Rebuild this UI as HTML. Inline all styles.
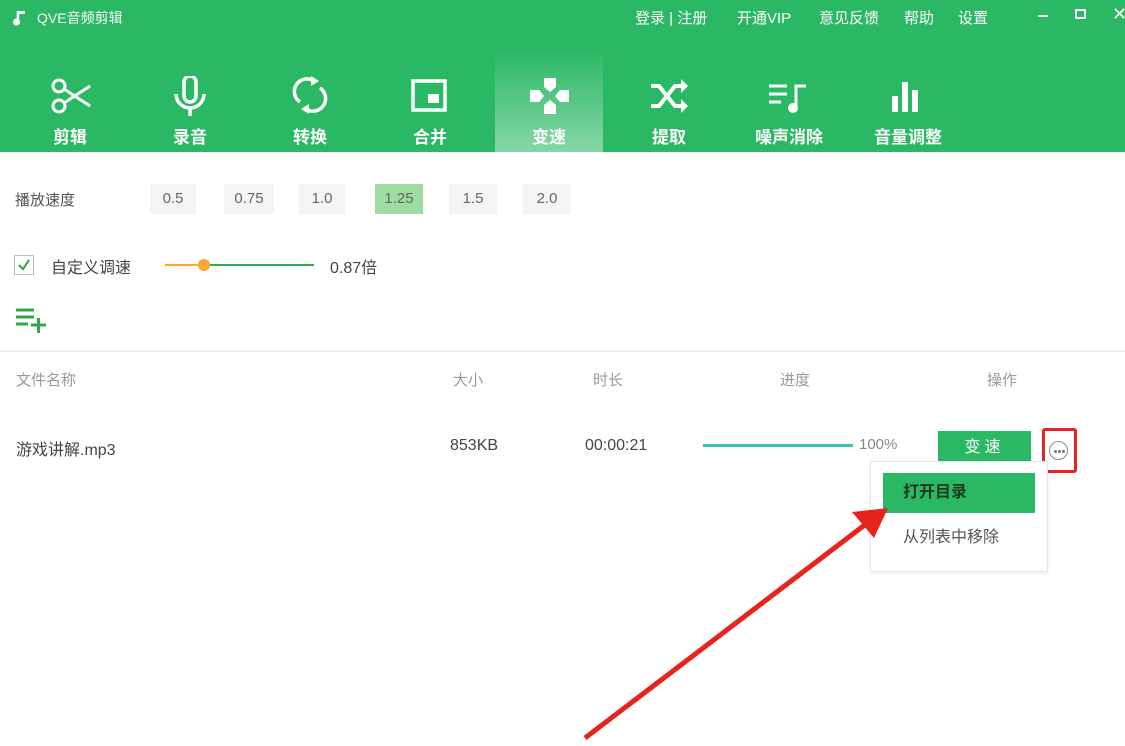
<!DOCTYPE html>
<html><head><meta charset="utf-8"><style>
*{margin:0;padding:0;box-sizing:border-box}
body{width:1125px;height:746px;background:#fff;position:relative;overflow:hidden;font-family:"Liberation Sans","Noto Sans CJK SC",sans-serif;color:#333}
.hdr{position:absolute;left:0;top:0;width:1125px;height:152px;background:#2bb864}
.t{position:absolute;color:#fff;font-size:15px}
.tab{position:absolute;top:50px;width:108px;height:102px;text-align:center;color:#fff;font-size:17px;font-weight:bold}
.tab svg{position:absolute;left:34px;top:26px}
.tab span{position:absolute;left:0;right:0;top:73px}
.act{background:linear-gradient(#2bb864,#86d6a6)}
.sp{position:absolute;top:184px;height:30px;line-height:30px;background:#f3f4f5;color:#666;font-size:15px;text-align:center}
.g{position:absolute;font-size:15px;color:#999}
</style></head><body>
<div class="hdr">
<svg style="position:absolute;left:12px;top:8px" width="18" height="18"><path d="M6 3v10" stroke="#fff" stroke-width="2.5"/><path d="M6 3h7v3H6z" fill="#fff"/><circle cx="4.5" cy="14" r="3.5" fill="#fff"/></svg>
<div class="t" style="left:37px;top:8px;font-size:14px">QVE音频剪辑</div>
<div class="t" style="left:635px;top:7px">登录 | 注册</div>
<div class="t" style="left:737px;top:7px">开通VIP</div>
<div class="t" style="left:819px;top:7px">意见反馈</div>
<div class="t" style="left:904px;top:7px">帮助</div>
<div class="t" style="left:958px;top:7px">设置</div>
<div style="position:absolute;left:1038px;top:15px;width:10px;height:2px;background:#fff"></div>
<div style="position:absolute;left:1075px;top:9px;width:11px;height:10px;border:2px solid #fff"></div>
<div class="t" style="left:1112px;top:4px;font-size:18px">✕</div>

<div class="tab" style="left:16px"><svg width="44" height="40"><circle cx="9" cy="10" r="6" fill="none" stroke="#fff" stroke-width="3"/><circle cx="9" cy="30" r="6" fill="none" stroke="#fff" stroke-width="3"/><path d="M14 13L40 30M14 27L40 10" stroke="#fff" stroke-width="3"/></svg><span>剪辑</span></div>
<div class="tab" style="left:136px"><svg width="44" height="40"><rect x="14" y="0" width="12" height="26" rx="6" fill="none" stroke="#fff" stroke-width="3.5"/><path d="M6 18a14 14 0 0 0 28 0M20 32v8" fill="none" stroke="#fff" stroke-width="3.5"/></svg><span>录音</span></div>
<div class="tab" style="left:256px"><svg width="44" height="40"><path d="M10 26a12 12 0 0 1 14-21M30 12a12 12 0 0 1-14 21" fill="none" stroke="#fff" stroke-width="3.5"/><path d="M21 0l8 5-8 5zM19 28l-8 5 8 5z" fill="#fff"/></svg><span>转换</span></div>
<div class="tab" style="left:376px"><svg width="44" height="40"><rect x="3" y="5" width="32" height="29" fill="none" stroke="#fff" stroke-width="3.5"/><rect x="18" y="18" width="11" height="9" fill="#fff"/></svg><span>合并</span></div>
<div class="tab act" style="left:495px"><svg width="44" height="40"><path d="M15 2h12v9l-6 5-6-5zM15 38h12v-9l-6-5-6 5zM1 14h9l5 6-5 6H1zM40 14h-9l-5 6 5 6h9z" fill="#fff"/></svg><span>变速</span></div>
<div class="tab" style="left:615px"><svg width="44" height="40"><path d="M2 10h8l16 20h8M2 30h8l16-20h8" fill="none" stroke="#fff" stroke-width="4"/><path d="M32 3l7 7-7 7zM32 23l7 7-7 7z" fill="#fff"/></svg><span>提取</span></div>
<div class="tab" style="left:735px"><svg width="44" height="40"><path d="M0 10h18M0 18h18M0 26h12M27 32V10h10" fill="none" stroke="#fff" stroke-width="3"/><circle cx="24" cy="32" r="5" fill="#fff"/></svg><span>噪声消除</span></div>
<div class="tab" style="left:854px"><svg width="44" height="40"><rect x="4" y="20" width="6" height="16" fill="#fff"/><rect x="14" y="6" width="6" height="30" fill="#fff"/><rect x="24" y="14" width="6" height="22" fill="#fff"/></svg><span>音量调整</span></div>
</div>

<div style="position:absolute;left:15px;top:189px;font-size:15px;color:#555">播放速度</div>
<div class="sp" style="left:150px;width:46px">0.5</div>
<div class="sp" style="left:224px;width:50px">0.75</div>
<div class="sp" style="left:299px;width:46px">1.0</div>
<div class="sp" style="left:375px;width:48px;background:#9fdca0">1.25</div>
<div class="sp" style="left:449px;width:48px">1.5</div>
<div class="sp" style="left:523px;width:48px">2.0</div>

<div style="position:absolute;left:14px;top:255px;width:20px;height:20px;border:1px solid #bbb"></div>
<svg style="position:absolute;left:16px;top:257px" width="16" height="16"><path d="M3 8l4 4 6-9" fill="none" stroke="#2ea040" stroke-width="2"/></svg>
<div style="position:absolute;left:51px;top:254px;font-size:16px;color:#444">自定义调速</div>
<div style="position:absolute;left:165px;top:264px;width:40px;height:2px;background:#f5a833"></div>
<div style="position:absolute;left:205px;top:264px;width:109px;height:2px;background:#35a94a"></div>
<div style="position:absolute;left:198px;top:259px;width:12px;height:12px;border-radius:50%;background:#f5a833"></div>
<div style="position:absolute;left:330px;top:254px;font-size:16px;color:#444">0.87倍</div>
<svg style="position:absolute;left:16px;top:307px" width="40" height="28"><path d="M0 3h18M0 10h18M0 17h12M15 18h15M22.5 11v15" stroke="#2fa84a" stroke-width="3"/></svg>
<div style="position:absolute;left:0;top:350px;width:1125px;height:2px;background:#f2f2f2"></div>

<div class="g" style="left:16px;top:369px">文件名称</div>
<div class="g" style="left:453px;top:369px">大小</div>
<div class="g" style="left:593px;top:369px">时长</div>
<div class="g" style="left:780px;top:369px">进度</div>
<div class="g" style="left:987px;top:369px">操作</div>

<div style="position:absolute;left:16px;top:436px;font-size:16px;color:#444">游戏讲解.mp3</div>
<div style="position:absolute;left:450px;top:437px;font-size:16px;color:#444">853KB</div>
<div style="position:absolute;left:585px;top:437px;font-size:16px;color:#444">00:00:21</div>
<div style="position:absolute;left:703px;top:444px;width:150px;height:3px;background:#3cc0b5"></div>
<div style="position:absolute;left:859px;top:436px;font-size:15px;color:#888">100%</div>
<div style="position:absolute;left:938px;top:431px;width:93px;height:30px;background:#2bb864;color:#fff;font-size:16px;text-align:center;line-height:34px;letter-spacing:4px">变速</div>
<div style="position:absolute;left:1042px;top:428px;width:35px;height:45px;border:3px solid #e8231d;border-radius:3px"></div>
<div style="position:absolute;left:1049px;top:441px;width:19px;height:19px;border:1.5px solid #888;border-radius:50%"></div>
<div style="position:absolute;left:1054px;top:450px;width:3px;height:3px;background:#777;border-radius:50%;box-shadow:4px 0 #777,8px 0 #777"></div>

<div style="position:absolute;left:870px;top:461px;width:178px;height:111px;background:#fff;border:1px solid #e6e6e6;box-shadow:0 1px 4px rgba(0,0,0,.08)"></div>
<div style="position:absolute;left:883px;top:473px;width:152px;height:40px;background:#2bb864;color:#1a3a22;font-size:16px;font-weight:bold;line-height:40px;padding-left:20px">打开目录</div>
<div style="position:absolute;left:903px;top:523px;font-size:16px;color:#555">从列表中移除</div>

<svg style="position:absolute;left:0;top:0" width="1125" height="746"><path d="M585 738L866 524" stroke="#e8231d" stroke-width="5"/><path d="M888 508L852 512L874 538z" fill="#e8231d"/></svg>
</body></html>
